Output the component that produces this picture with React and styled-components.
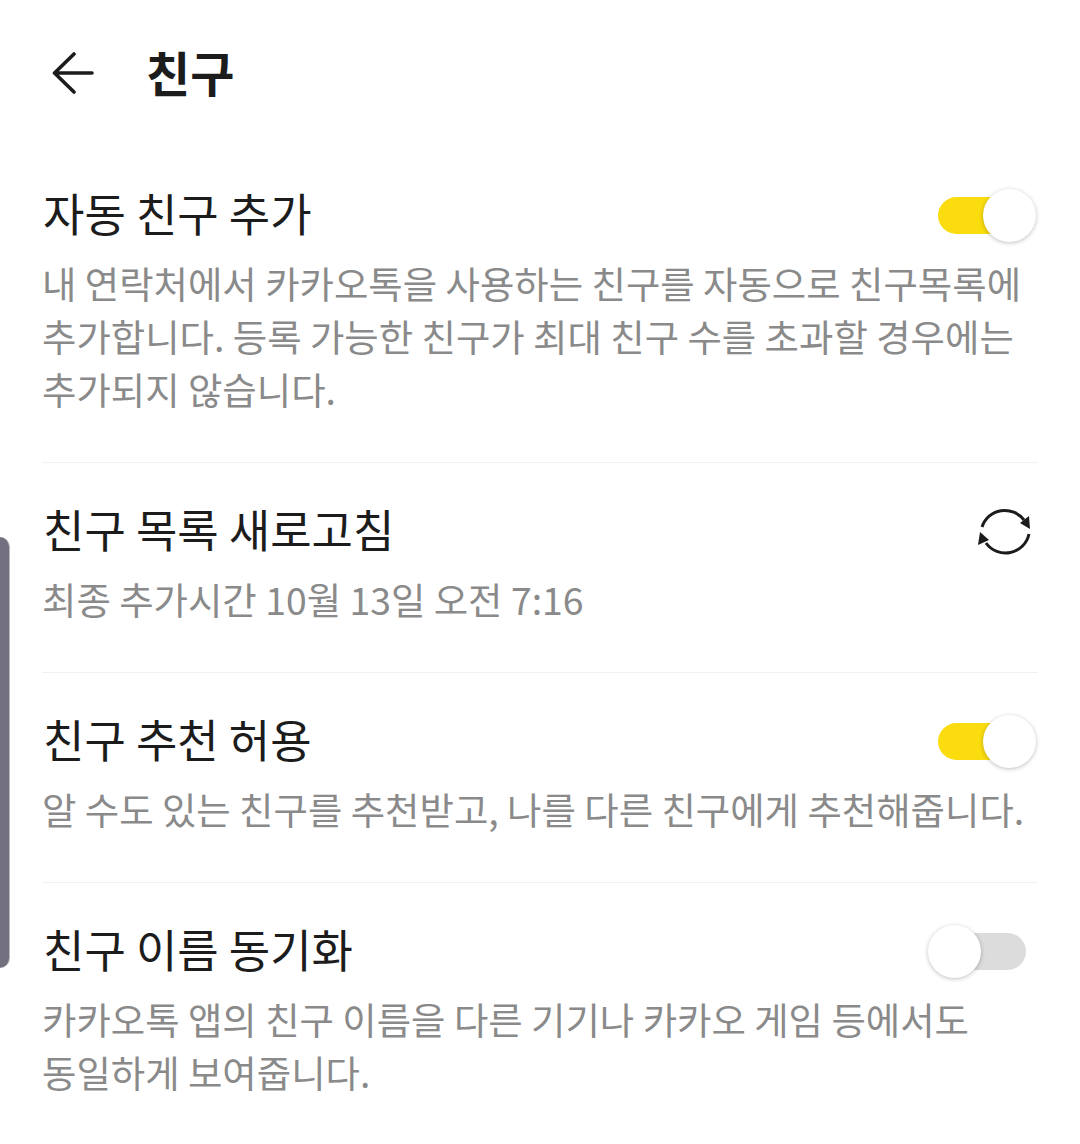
import React from "react";
import styled, { createGlobalStyle } from "styled-components";

const GlobalStyle = createGlobalStyle`
  html, body {
    margin: 0;
    padding: 0;
    background: #fff;
  }
  body {
    font-family: "Noto Sans CJK KR", "Noto Sans", sans-serif;
  }
`;

function BackIcon() {
  return (
    <svg width="44" height="44" viewBox="0 0 44 44" fill="none">
      <path d="M40 21H2.500M22 2L2.500 21L22 40" stroke="#1c1c1c" strokeWidth="3.600" strokeLinecap="round" strokeLinejoin="round" />
    </svg>
  );
}

function RefreshIcon() {
  return (
    <svg width="54" height="54" viewBox="0 0 54 54" fill="none">
      <path d="M5 23A24 24 0 0 1 47 16" stroke="#1c1c1c" strokeWidth="3" />
      <path d="M52 30A24 24 0 0 1 9 39" stroke="#1c1c1c" strokeWidth="3" />
      <path d="M43 19L52 12L53 25Z" fill="#1c1c1c" />
      <path d="M3 28L12 36L1 41Z" fill="#1c1c1c" />
    </svg>
  );
}

function App() {
  return (
    <Page>
      <GlobalStyle />
      <SideHandle />
      <Header>
        <BackButton>
          <BackIcon />
        </BackButton>
        <HeaderTitle>친구</HeaderTitle>
      </Header>
      <List>
        <Row>
          <RowHead>
            <RowTitle>자동 친구 추가</RowTitle>
            <Toggle $on />
          </RowHead>
          <RowText>
            내 연락처에서 카카오톡을 사용하는 친구를 자동으로 친구목록에
            <br />
            추가합니다. 등록 가능한 친구가 최대 친구 수를 초과할 경우에는
            <br />
            추가되지 않습니다.
          </RowText>
        </Row>
        <Row>
          <RowHead>
            <RowTitle>친구 목록 새로고침</RowTitle>
            <IconSlot>
              <RefreshIcon />
            </IconSlot>
          </RowHead>
          <RowText>최종 추가시간 10월 13일 오전 7:16</RowText>
        </Row>
        <Row>
          <RowHead>
            <RowTitle>친구 추천 허용</RowTitle>
            <Toggle $on />
          </RowHead>
          <RowText>알 수도 있는 친구를 추천받고, 나를 다른 친구에게 추천해줍니다.</RowText>
        </Row>
        <Row>
          <RowHead>
            <RowTitle>친구 이름 동기화</RowTitle>
            <Toggle />
          </RowHead>
          <RowText>
            카카오톡 앱의 친구 이름을 다른 기기나 카카오 게임 등에서도
            <br />
            동일하게 보여줍니다.
          </RowText>
        </Row>
      </List>
    </Page>
  );
}

export default App;

const Page = styled.div`
  position: relative;
  width: 1080px;
  height: 1144px;
  overflow: hidden;
  background: #fff;
`;

const SideHandle = styled.div`
  position: absolute;
  left: 0;
  top: 537px;
  width: 9px;
  height: 431px;
  background: #72707e;
  border: solid #b9b8be;
  border-width: 0 1px 0 0;
  border-radius: 0 10px 10px 0;
`;

const Header = styled.header`
  height: 147px;
  display: flex;
  align-items: flex-start;
  padding: 52px 0 0 52px;
  box-sizing: border-box;
`;

const BackButton = styled.div`
  width: 44px;
  height: 44px;
  margin-right: 50px;
`;

const HeaderTitle = styled.h1`
  margin: -14px 0 0;
  font-size: 48px;
  line-height: 66px;
  font-weight: 700;
  color: #1c1c1c;
`;

const List = styled.div`
  display: flex;
  flex-direction: column;
  padding: 0 42px;
`;

const Row = styled.section`
  padding: 33px 0 46px;
  border-bottom: 1px solid #f1f1f1;
  &:last-child {
    border-bottom: none;
  }
`;

const RowHead = styled.div`
  height: 66px;
  display: flex;
  align-items: center;
  justify-content: space-between;
`;

const RowTitle = styled.h2`
  margin: 0 0 0 1px;
  font-size: 45px;
  line-height: 66px;
  font-weight: 400;
  color: #1c1c1c;
`;

const RowText = styled.p`
  margin: 11px 0 0;
  font-size: 37.400px;
  line-height: 53px;
  font-weight: 400;
  color: #8a8a8a;
  white-space: nowrap;
`;

const IconSlot = styled.div`
  width: 54px;
  height: 54px;
  margin: 4px 7px 0 0;
`;

const Toggle = styled.div`
  position: relative;
  width: 88px;
  height: 37px;
  margin: 5px 12px 0 0;
  border-radius: 19px;
  background: ${(p) => (p.$on ? "#fadc0f" : "#dcdcdc")};
  &::after {
    content: "";
    position: absolute;
    top: -8px;
    left: ${(p) => (p.$on ? "45px" : "-10px")};
    width: 53px;
    height: 53px;
    border-radius: 50%;
    background: #fff;
    box-shadow: 0 1px 4px rgba(0, 0, 0, 0.25);
  }
`;
